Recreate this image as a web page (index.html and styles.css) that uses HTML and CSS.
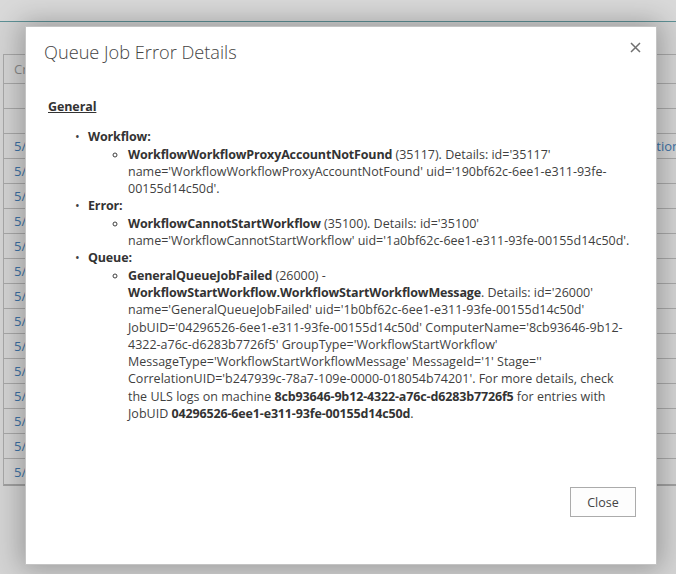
FILE: index.html
```html
<!DOCTYPE html>
<html>
<head>
<meta charset="utf-8">
<title>Queue Job Error Details</title>
<link rel="stylesheet" href="styles.css">
</head>
<body>
<div class="page">
  <div class="suitebar"></div>
  <div class="grid">
    <div class="row head"><span class="hcell">Created</span></div>
    <div class="row"></div>
    <div class="row"></div>
    <div class="row"><span class="date">5/15/2014</span><span class="rlink">Notification</span></div>
    <div class="row"><span class="date">5/15/2014</span></div>
    <div class="row"><span class="date">5/15/2014</span></div>
    <div class="row"><span class="date">5/15/2014</span></div>
    <div class="row"><span class="date">5/15/2014</span></div>
    <div class="row"><span class="date">5/15/2014</span></div>
    <div class="row"><span class="date">5/15/2014</span></div>
    <div class="row"><span class="date">5/15/2014</span></div>
    <div class="row"><span class="date">5/15/2014</span></div>
    <div class="row"><span class="date">5/15/2014</span></div>
    <div class="row"><span class="date">5/15/2014</span></div>
    <div class="row"><span class="date">5/15/2014</span></div>
    <div class="row"><span class="date">5/15/2014</span></div>
    <div class="row last"><span class="date">5/15/2014</span></div>
  </div>
</div>

<div class="dialog">
  <div class="dlg-head">
    <h1 class="dlg-title">Queue Job Error Details</h1>
    <span class="dlg-x" aria-label="Close">
      <svg width="11" height="11" viewBox="0 0 11 11"><path d="M1 1 L10 10 M10 1 L1 10" stroke="#707070" stroke-width="1.5" fill="none"/></svg>
    </span>
  </div>
  <div class="dlg-body">
    <p class="section">General</p>
    <ul class="lvl1">
      <li><b>Workflow:</b>
        <ul class="lvl2">
          <li><b>WorkflowWorkflowProxyAccountNotFound</b> (35117). Details: id='35117'<br>name='WorkflowWorkflowProxyAccountNotFound' uid='190bf62c-6ee1-e311-93fe-<br>00155d14c50d'.</li>
        </ul>
      </li>
      <li><b>Error:</b>
        <ul class="lvl2">
          <li><b>WorkflowCannotStartWorkflow</b> (35100). Details: id='35100'<br>name='WorkflowCannotStartWorkflow' uid='1a0bf62c-6ee1-e311-93fe-00155d14c50d'.</li>
        </ul>
      </li>
      <li><b>Queue:</b>
        <ul class="lvl2">
          <li><b>GeneralQueueJobFailed</b> (26000) -<br><b>WorkflowStartWorkflow.WorkflowStartWorkflowMessage</b>. Details: id='26000'<br>name='GeneralQueueJobFailed' uid='1b0bf62c-6ee1-e311-93fe-00155d14c50d'<br>JobUID='04296526-6ee1-e311-93fe-00155d14c50d' ComputerName='8cb93646-9b12-<br>4322-a76c-d6283b7726f5' GroupType='WorkflowStartWorkflow'<br>MessageType='WorkflowStartWorkflowMessage' MessageId='1' Stage=''<br>CorrelationUID='b247939c-78a7-109e-0000-018054b74201'. For more details, check<br>the ULS logs on machine <b>8cb93646-9b12-4322-a76c-d6283b7726f5</b> for entries with<br>JobUID <b>04296526-6ee1-e311-93fe-00155d14c50d</b>.</li>
        </ul>
      </li>
    </ul>
  </div>
  <div class="dlg-foot">
    <button class="btn">Close</button>
  </div>
</div>
</body>
</html>
```

FILE: styles.css
```css
html, body {
  margin: 0;
  padding: 0;
  height: 100%;
  overflow: hidden;
}
body {
  background: #d4d4d4;
  font-family: "Open Sans", "Noto Sans", sans-serif;
  position: relative;
}
.page {
  width: 680px;
}
.suitebar {
  height: 21px;
  background: #d9d9d9;
  border-bottom: 1px solid #5e9196;
}
.grid {
  margin-top: 32px;
  margin-left: 3px;
  border-left: 1px solid #a8a8a8;
  border-bottom: 2px solid #a0a0a0;
}
.row {
  height: 24px;
  border-top: 1px solid #a8a8a8;
  display: flex;
  align-items: center;
  justify-content: space-between;
  padding-left: 10px;
  font-size: 13px;
  white-space: nowrap;
}
.row.head {
  height: 28px;
}
.row.last {
  height: 25px;
}
.hcell {
  color: #8a8a8a;
  font-size: 13px;
}
.date {
  color: #3d72a6;
}
.rlink {
  color: #3d72a6;
}
.dialog {
  position: absolute;
  left: 25px;
  top: 26px;
  width: 632px;
  height: 539px;
  box-sizing: border-box;
  background: #fff;
  border: 1px solid #c4c4c4;
  box-shadow: 0 0 26px 4px rgba(0, 0, 0, 0.28);
  display: flex;
  flex-direction: column;
  color: #444;
}
.dlg-head {
  display: flex;
  justify-content: space-between;
  align-items: flex-start;
  padding: 12px 15px 0 18px;
}
.dlg-title {
  margin: 0;
  font-size: 18.2px;
  font-weight: 300;
  color: #444;
  line-height: 26px;
}
.dlg-x {
  display: flex;
  margin-top: 3px;
}
.dlg-body {
  flex: 1;
  padding: 33px 0 0 22px;
  font-size: 12.5px;
  line-height: 17.3px;
  color: #3f3f3f;
}
.section {
  margin: 0;
  font-weight: 700;
  letter-spacing: -0.1px;
  text-decoration: underline;
  color: #333;
}
.dlg-body b {
  font-weight: 700;
  letter-spacing: -0.15px;
  color: #333;
}
.lvl1 {
  margin: 13px 0 0;
  padding-left: 40px;
  list-style-type: "•\2002\2009";
  white-space: nowrap;
}
.lvl2 {
  margin: 0;
  padding-left: 40px;
  list-style: circle;
}
.dlg-foot {
  display: flex;
  justify-content: flex-end;
  padding: 0 20px 47px 0;
}
.btn {
  width: 66px;
  height: 30px;
  border: 1px solid #ababab;
  background: #fdfdfd;
  font-family: "Open Sans", "Noto Sans", sans-serif;
  font-size: 12.5px;
  color: #444;
  padding: 0;
}
```
